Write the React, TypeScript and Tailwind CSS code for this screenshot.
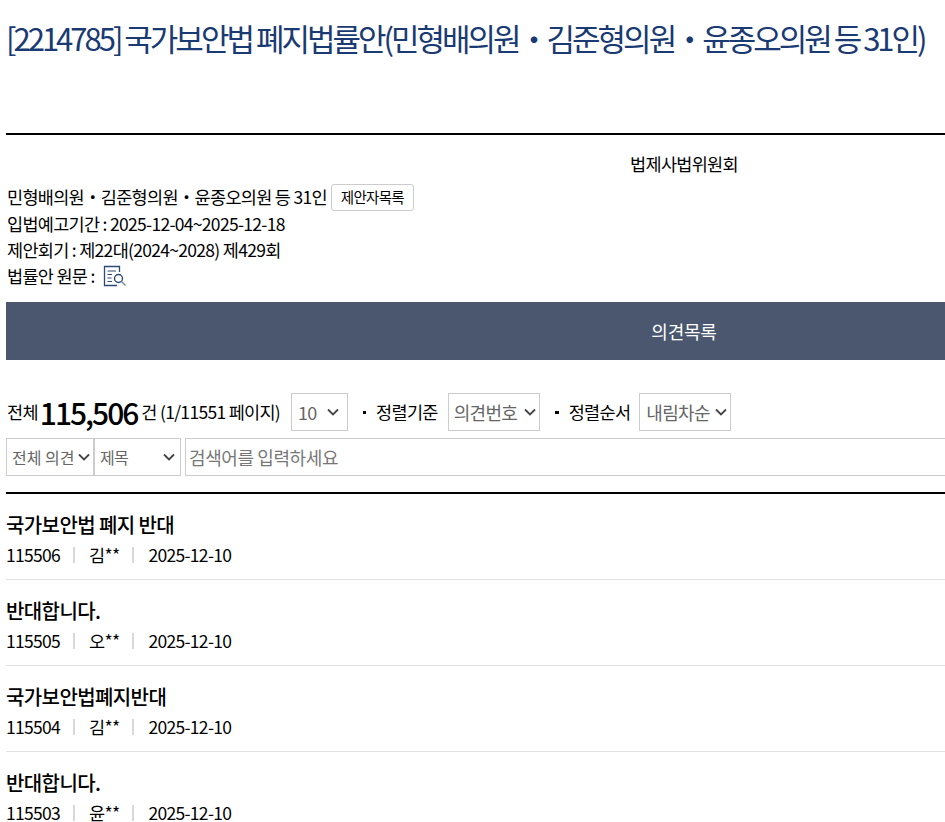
import { JSX } from "react";

const opinions = [
  { title: "국가보안법 폐지 반대", no: "115506", name: "김**", date: "2025-12-10" },
  { title: "반대합니다.", no: "115505", name: "오**", date: "2025-12-10" },
  { title: "국가보안법폐지반대", no: "115504", name: "김**", date: "2025-12-10" },
  { title: "반대합니다.", no: "115503", name: "윤**", date: "2025-12-10" },
];

const Chevron = ({ className }: { className: string }): JSX.Element => (
  <svg viewBox="0 0 12 8" className={className} fill="none" stroke="#444" strokeWidth="1.8">
    <path d="M1 1.5 L6 6.5 L11 1.5" />
  </svg>
);

const DocIcon = (): JSX.Element => (
  <svg viewBox="0 0 24 22" className="w-6 h-[22px] ml-[8px]" fill="none" stroke="#2c4a78" strokeWidth="1">
    <path d="M16.5 7V1.5H1.5V20.5H14" strokeWidth="1.3" />
    <path d="M4.5 6H13M4.5 9.500H9M4.500 13H8.500M4.500 16.500H9" />
    <circle cx="15.500" cy="13.500" r="4" strokeWidth="1.4" />
    <path d="M18.500 16.500L22.500 20.500" stroke="#7f8fa8" strokeWidth="1.600" />
  </svg>
);

const Box = ({ label, className, chevron }: { label: string; className: string; chevron: string }): JSX.Element => (
  <div className={`flex items-center border border-[#cccccc] text-[#666] ${className}`}>
    <span className="whitespace-nowrap">{label}</span>
    <Chevron className={chevron} />
  </div>
);

export default function App(): JSX.Element {
  return (
    <div className="w-[945px] h-[822px] overflow-hidden bg-white text-black tracking-[-0.7px] font-['Noto_Sans_CJK_KR','Noto_Sans',sans-serif]">
      <div className="w-[1356px] ml-[6px]">
        <h1 className="pt-[11px] text-[31px] leading-[54px] h-[133px] tracking-[-3px] text-[#1a3a73] whitespace-nowrap">
          [2214785] 국가보안법 폐지법률안(민형배의원・김준형의원・윤종오의원 등 31인)
        </h1>
        <div className="border-t-2 border-black pt-[17px]">
          <p className="text-center text-[17.5px] leading-[24px]">법제사법위원회</p>
          <div className="mt-[7px] pl-px text-[17.5px] leading-[26px]">
            <div className="flex items-center h-[28px]">
              민형배의원・김준형의원・윤종오의원 등 31인
              <span className="ml-[4px] flex items-center justify-center w-[83px] h-[27px] border border-[#cccccc] rounded-[3px] text-[14.5px]">제안자목록</span>
            </div>
            <p>입법예고기간 : 2025-12-04~2025-12-18</p>
            <p>제안회기 : 제22대(2024~2028) 제429회</p>
            <div className="flex items-center">
              법률안 원문 :
              <DocIcon />
            </div>
          </div>
        </div>
        <div className="mt-[13px] h-[58px] bg-[#4a576f] flex items-center justify-center text-white text-[18px] tracking-[-0.2px]">의견목록</div>
        <div className="mt-[33px] flex items-center h-[38px] pl-px text-[17.5px] whitespace-nowrap">
          <span>전체</span>
          <strong className="ml-[2px] text-[30px] font-medium leading-[38px] tracking-[-2px]">115,506</strong>
          <span className="ml-[4px]">건 (1/11551 페이지)</span>
          <Box label="10" className="ml-[11px] w-[57px] h-[38px] pl-[6px] text-[18px] justify-between pr-[8px]" chevron="w-[12px] h-[8px]" />
          <span className="ml-[15px] w-[3px] h-[3px] bg-black" />
          <span className="ml-[10px]">정렬기준</span>
          <Box label="의견번호" className="ml-[10px] w-[92px] h-[38px] pl-[5px] text-[18px] justify-between pr-[3px]" chevron="w-[12px] h-[8px]" />
          <span className="ml-[15px] w-[4px] h-[3px] bg-black" />
          <span className="ml-[10px]">정렬순서</span>
          <Box label="내림차순" className="ml-[9px] w-[92px] h-[38px] pl-[6px] text-[18px] justify-between pr-[3px]" chevron="w-[12px] h-[8px]" />
        </div>
        <div className="mt-[7px] flex h-[38px]">
          <Box label="전체 의견" className="w-[88px] pl-[5px] pr-[3px] text-[16px] tracking-normal justify-between" chevron="w-[12px] h-[8px]" />
          <Box label="제목" className="w-[87px] pl-[5px] pr-[5px] text-[16px] justify-between" chevron="w-[12px] h-[8px]" />
          <div className="ml-[4px] flex-1 flex items-center border border-[#cccccc] pl-[3px] text-[18px] tracking-[-0.4px] text-[#777]">검색어를 입력하세요</div>
        </div>
        <div className="mt-[16px] border-t-2 border-black">
          {opinions.map((o, i) => (
            <div key={i} className="h-[86px] border-b border-[#e2e2e2] pt-[17px]">
              <p className="text-[20px] leading-[28px] font-medium tracking-[-0.6px]">{o.title}</p>
              <div className="mt-[2px] flex items-center text-[17.5px] leading-[28px]">
                <span>{o.no}</span>
                <span className="ml-[13px] w-[2px] h-[16px] bg-[#d8d8d8]" />
                <span className="ml-[14px]">{o.name}</span>
                <span className="ml-[13px] w-[2px] h-[16px] bg-[#d8d8d8]" />
                <span className="ml-[14px]">{o.date}</span>
              </div>
            </div>
          ))}
        </div>
      </div>
    </div>
  );
}
